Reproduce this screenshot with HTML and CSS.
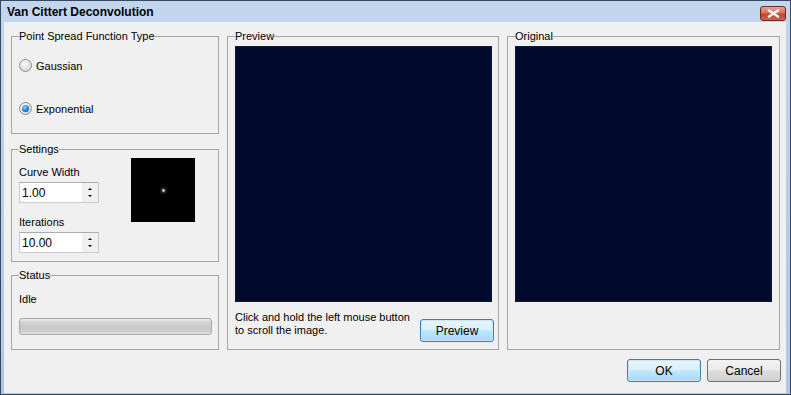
FILE: index.html
```html
<!DOCTYPE html>
<html lang="en">
<head>
<meta charset="UTF-8">
<title>Van Cittert Deconvolution</title>
<link rel="stylesheet" href="styles.css">
</head>
<body>

<div class="window">
  <div class="titlebar">
    <span class="title">Van Cittert Deconvolution</span>
    <button class="close" aria-label="Close">
      <svg width="13" height="9" viewBox="0 0 13 9"><path d="M2 1.5L11 7.5M11 1.5L2 7.5" stroke="#fff" stroke-width="2.4" stroke-linecap="round"/></svg>
    </button>
  </div>

  <div class="client">
    <div class="panes">
      <div class="left-col">
        <fieldset class="group psf">
          <legend>Point Spread Function Type</legend>
          <label class="radio"><span class="dot"></span>Gaussian</label>
          <label class="radio"><span class="dot checked"></span>Exponential</label>
        </fieldset>

        <fieldset class="group settings">
          <legend>Settings</legend>
          <div class="fields">
            <div class="field-label">Curve Width</div>
            <div class="spin"><span class="spin-value">1.00</span><span class="spin-btns"><i class="up"></i><i class="down"></i></span></div>
            <div class="field-label">Iterations</div>
            <div class="spin"><span class="spin-value">10.00</span><span class="spin-btns"><i class="up"></i><i class="down"></i></span></div>
          </div>
          <div class="kernel"><span class="spot"></span></div>
        </fieldset>

        <fieldset class="group status">
          <legend>Status</legend>
          <div class="status-text">Idle</div>
          <div class="progress"></div>
        </fieldset>
      </div>

      <fieldset class="group view preview">
        <legend>Preview</legend>
        <div class="image"></div>
        <div class="hint-row">
          <p class="hint">Click and hold the left mouse button<br>to scroll the image.</p>
          <button class="btn default">Preview</button>
        </div>
      </fieldset>

      <fieldset class="group view original">
        <legend>Original</legend>
        <div class="image"></div>
      </fieldset>
    </div>

    <div class="actions">
      <button class="btn default">OK</button>
      <button class="btn">Cancel</button>
    </div>
  </div>
</div>

</body>
</html>
```

FILE: styles.css
```css
html,body{
  margin:0;
  padding:0;
  background:#f0f0f0;
  font-family:"Liberation Sans",Arial,sans-serif;
  font-size:11px;
  color:#000;
}

/* ----------  WINDOW FRAME  ---------- */
.window{
  width:791px;
  height:395px;
  box-sizing:border-box;
  border:1px solid #37495e;
  background:linear-gradient(#c2d6ee,#aec7e5);
  padding:0 4px 1px 3px;
  display:flex;
  flex-direction:column;
}
.titlebar{
  height:21px;
  display:flex;
  align-items:center;
  justify-content:space-between;
  padding-left:3px;
}
.title{
  font-weight:bold;
  font-size:12px;
  color:#000;
}
.close{
  width:26px;
  height:15px;
  margin-top:3px;
  padding:0;
  border:1px solid #6b2b22;
  border-radius:3px;
  background:linear-gradient(#e7a493 0%,#d6735c 45%,#c24427 55%,#d2664a 100%);
  display:flex;
  align-items:center;
  justify-content:center;
}

.client{
  flex:1;
  background:#f0f0f0;
  padding:8px 5px 0 7px;
  display:flex;
  flex-direction:column;
}

/* ----------  GROUP BOXES  ---------- */
.panes{
  display:flex;
  gap:8px;
}
.group{
  margin:0;
  box-sizing:border-box;
  border:1px solid #a5a5a5;
  padding:0 6px 0 7px;
  min-width:0;
}
.group legend{
  padding:0;
  line-height:13px;
}

.left-col{
  width:208px;
  display:flex;
  flex-direction:column;
}
.psf{height:104px;}
.settings{
  height:119px;
  margin-top:9px;
  display:flex;
}
.status{
  height:81px;
  margin-top:7px;
}

/* radio buttons */
.radio{
  display:flex;
  align-items:center;
  gap:4px;
  height:13px;
}
.psf .radio:first-of-type{margin-top:16px;}
.psf .radio + .radio{margin-top:30px;}
.dot{
  width:11px;
  height:11px;
  border:1px solid #8f8f8f;
  border-radius:50%;
  background:radial-gradient(circle at 40% 35%,#fdfdfd,#d9d9d9 70%,#cfcfcf);
  position:relative;
}
.dot.checked::after{
  content:"";
  position:absolute;
  left:2px;
  top:2px;
  width:7px;
  height:7px;
  border-radius:50%;
  background:radial-gradient(circle at 40% 35%,#8fd3ff,#1a74c4 60%,#0b4b8a);
}

/* settings */
.fields{
  width:80px;
  padding-top:10px;
}
.field-label{
  line-height:13px;
  height:13px;
}
.spin{
  height:21px;
  box-sizing:border-box;
  margin-top:3px;
  border:1px solid #c9cbd0;
  border-top-color:#abadb3;
  background:#fff;
  display:flex;
  align-items:center;
  justify-content:space-between;
}
.spin + .field-label{margin-top:13px;}
.spin-value{
  font-size:12px;
  padding-left:2px;
}
.spin-btns{
  width:16px;
  height:19px;
  background:#f0f0f0;
  display:flex;
  flex-direction:column;
  align-items:center;
  justify-content:center;
  gap:5px;
}
.spin-btns i{
  width:0;
  height:0;
  border-left:2px solid transparent;
  border-right:2px solid transparent;
}
.spin-btns .up{border-bottom:2px solid #000;}
.spin-btns .down{border-top:2px solid #000;}

.kernel{
  width:64px;
  height:64px;
  margin:2px 0 0 32px;
  background:#000;
  display:flex;
  align-items:center;
  justify-content:center;
}
.spot{
  width:3px;
  height:3px;
  background:radial-gradient(circle,#fff 30%,rgba(255,255,255,.3) 70%,transparent);
  box-shadow:0 0 2px 1px rgba(255,255,255,.25);
}

/* status */
.status-text{
  margin-top:11px;
  line-height:13px;
}
.progress{
  margin-top:12px;
  height:17px;
  box-sizing:border-box;
  border:1px solid #a9a9a9;
  border-radius:3px;
  background:linear-gradient(#ececec 0%,#d4d4d4 20%,#c9c9c9 50%,#cdcdcd 80%,#e2e2e2 100%);
}

/* ----------  PREVIEW / ORIGINAL  ---------- */
.view{
  height:320px;
  padding:0 6px 0 7px;
}
.preview{width:272px;}
.original{width:273px;}
.image{
  width:257px;
  height:256px;
  box-sizing:border-box;
  margin-top:3px;
  background:#010a2c;
  border:1px solid #0f1a3b;
}
.hint-row{
  display:flex;
  justify-content:space-between;
  align-items:flex-start;
  margin-top:9px;
}
.hint{
  margin:0;
  line-height:13px;
}

/* ----------  BUTTONS  ---------- */
.btn{
  width:74px;
  height:23px;
  padding:0;
  font:inherit;
  font-size:12px;
  border:1px solid #707070;
  border-radius:3px;
  background:linear-gradient(#f3f3f3 0%,#ebebeb 48%,#dddddd 52%,#cfcfcf 100%);
  color:#000;
}
.btn.default{
  border-color:#3c7fb1;
  background:linear-gradient(#eaf6fd 0%,#d9f0fc 48%,#bee6fd 52%,#a7d9f5 100%);
  box-shadow:inset 0 0 0 1px #c8e6f7;
}
.hint-row .btn{
  margin-top:8px;
  margin-right:-2px;
}

.actions{
  display:flex;
  justify-content:flex-end;
  gap:6px;
  margin-top:9px;
}
```
